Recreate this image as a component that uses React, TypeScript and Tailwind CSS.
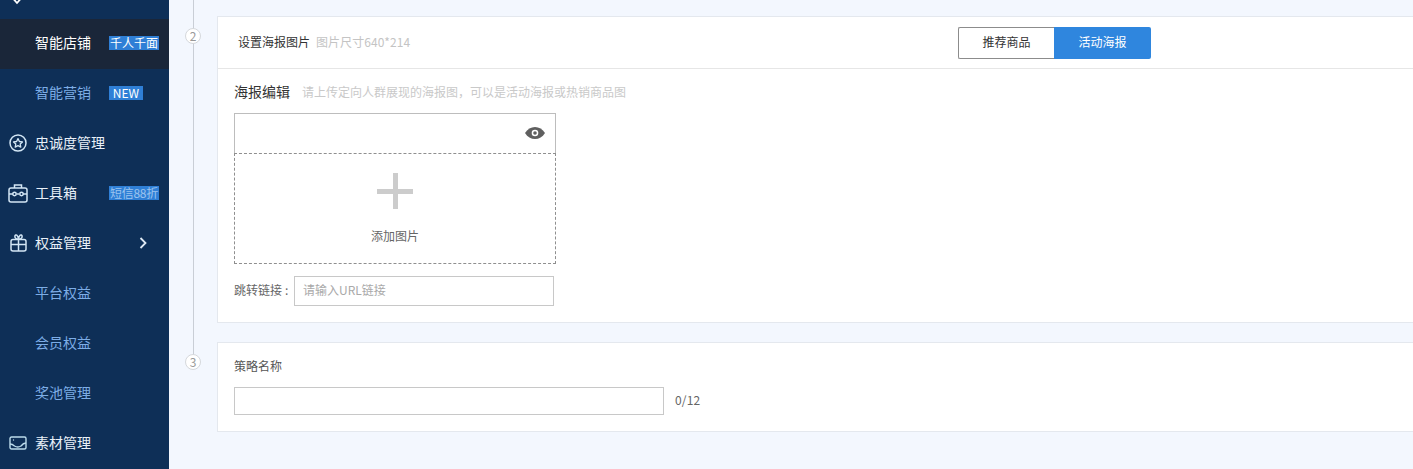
import React from "react";

function Star() {
  return (
    <svg width="18" height="18" viewBox="0 0 18 18" fill="none" stroke="#d3e6f5" strokeWidth="1.5">
      <circle cx="9" cy="9" r="8" />
      <path d="M9 4.600l1.400 2.900 3.100.4-2.300 2.100.6 3.100L9 11.600l-2.800 1.500.6-3.100-2.300-2.100 3.100-.4z" strokeLinejoin="round" strokeWidth="1.300" />
    </svg>
  );
}
function Toolbox() {
  return (
    <svg width="20" height="19" viewBox="0 0 20 19" fill="none" stroke="#d3e6f5" strokeWidth="1.500">
      <rect x="1" y="4" width="18" height="14" rx="2" />
      <path d="M6.500 4V1h7v3M1 10h4M15 10h4M8.500 10h3" />
      <circle cx="6.500" cy="10" r="1.700" />
      <circle cx="13.500" cy="10" r="1.700" />
    </svg>
  );
}
function Gift() {
  return (
    <svg width="17" height="18" viewBox="0 0 17 18" fill="none" stroke="#d3e6f5" strokeWidth="1.500">
      <rect x="1" y="5.500" width="15" height="11.500" rx="2" />
      <path d="M1 10.500h15M8.500 5.500V17M8.500 5.500C6 5.500 4.500 3.500 5 1.800s3-1.300 3.500 3.700zM8.500 5.500c2.500 0 4-2 3.500-3.700s-3-1.300-3.500 3.700z" />
    </svg>
  );
}
function Inbox() {
  return (
    <svg width="18" height="14" viewBox="0 0 18 14" fill="none" stroke="#bcdcec" strokeWidth="1.400">
      <rect x="1" y="1" width="16" height="12" rx="1.500" />
      <path d="M1 8c2 0 3 .6 4.500 2 2 1.200 4.500 1.200 6.500 0 1.500-2 3-3 5-3" />
      <circle cx="4.500" cy="4" r=".7" fill="#bcdcec" stroke="none" />
    </svg>
  );
}

type ItemProps = {
  icon?: React.ReactNode;
  label: string;
  sub?: boolean;
  active?: boolean;
  badge?: string;
  badgeClass?: string;
  chevron?: boolean;
};

function Item({ icon, label, sub, active, badge, badgeClass, chevron }: ItemProps) {
  const color = active ? "text-white" : sub ? "text-[#7dade6]" : "text-[#e8f0f8]";
  return (
    <div className={`relative flex h-[50px] items-center ${active ? "bg-[#1a2639]" : ""}`}>
      <div className="mb-[2px] flex w-[35px] shrink-0 items-center justify-center pl-[1px]">{icon}</div>
      <span className={`mb-[4px] text-[14px] leading-none ${color}`}>{label}</span>
      {badge && (
        <span className={`absolute left-[109px] mb-[2px] flex h-[14px] items-center justify-center bg-[#2f7fd6] text-[12px] leading-none ${badgeClass ?? ""}`}>
          {badge}
        </span>
      )}
      {chevron && (
        <svg className="absolute left-[139px] mb-[2px]" width="9" height="12" viewBox="0 0 9 12" fill="none" stroke="#dfe9f3" strokeWidth="1.800">
          <path d="M1.500 1l5 5-5 5" />
        </svg>
      )}
    </div>
  );
}

function Step({ n, top }: { n: number; top: string }) {
  return (
    <span className={`absolute left-[16px] ${top} flex h-[16px] w-[16px] items-center justify-center rounded-full border border-[#d5d8dc] bg-white text-[12px] leading-none text-[#999]`}>
      {n}
    </span>
  );
}

export default function App() {
  return (
    <div className="flex h-[469px] w-[1413px] overflow-hidden bg-[#f3f7fe] font-['Noto_Sans_CJK_SC','Liberation_Sans',sans-serif]">
      <aside className="w-[169px] shrink-0 overflow-hidden bg-[#0e2f57]">
        <div className="flex h-[19px] items-start pl-[12px]">
          <svg width="10" height="6" viewBox="0 0 10 6" fill="none" stroke="#fff" strokeWidth="1.800">
            <path d="M1.500 -1L5 3l3.500-4" />
          </svg>
        </div>
        <Item label="智能店铺" active badge="千人千面" badgeClass="w-[50px] text-white" />
        <Item label="智能营销" sub badge="NEW" badgeClass="w-[34px] text-white" />
        <Item label="忠诚度管理" icon={<Star />} />
        <Item label="工具箱" icon={<Toolbox />} badge="短信88折" badgeClass="w-[50px] tracking-[-0.3px] text-[#9cc4ee]" />
        <Item label="权益管理" icon={<Gift />} chevron />
        <Item label="平台权益" sub />
        <Item label="会员权益" sub />
        <Item label="奖池管理" sub />
        <Item label="素材管理" icon={<Inbox />} />
      </aside>

      <div className="relative w-[48px] shrink-0">
        <div className="ml-[24px] h-[355px] w-px bg-[#c9ced6]" />
        <Step n={2} top="top-[28px]" />
        <Step n={3} top="top-[354px]" />
      </div>

      <main className="min-w-0 flex-1 pt-[16px]">
        <section className="-mr-4 h-[307px] border border-r-0 border-[#e4e8ee] bg-white">
          <div className="flex h-[52px] items-center border-b border-[#e6e6e6] pl-[20px]">
            <span className="mb-[2px] text-[12px] text-[#333]">设置海报图片</span>
            <span className="mb-[2px] ml-[6px] w-[96px] text-[12px] tracking-[0.05px] text-[#c4c4c4]">图片尺寸640*214</span>
            <div className="ml-[546px] flex h-[32px] w-[193px] text-[12px]">
              <button className="h-full w-[96px] rounded-l-[2px] border border-r-0 border-[#8c8c8c] bg-white pb-[2px] text-[#333]">推荐商品</button>
              <button className="h-full w-[97px] rounded-r-[2px] bg-[#2f86de] pb-[2px] text-white">活动海报</button>
            </div>
          </div>
          <div className="px-[16px] pt-[13px]">
            <div className="flex h-[20px] items-center">
              <span className="mb-[2px] text-[14px] leading-none text-[#333]">海报编辑</span>
              <span className="ml-[12px] text-[12px] leading-none text-[#c9c9c9]">请上传定向人群展现的海报图，可以是活动海报或热销商品图</span>
            </div>
            <div className="mt-[11px] w-[322px]">
              <div className="flex h-[40px] items-center justify-end border border-b-0 border-[#bdbdbd] pb-[2px] pr-[9px]">
                <svg width="22" height="14" viewBox="0 0 22 14">
                  <path d="M1 7c2.500-4 6-6 10-6s7.500 2 10 6c-2.500 4-6 6-10 6S3.500 11 1 7z" fill="#5f5f5f" />
                  <circle cx="11" cy="7" r="3.300" fill="#fff" />
                  <circle cx="11" cy="7" r="1.800" fill="#5f5f5f" />
                </svg>
              </div>
              <div className="flex h-[111px] flex-col items-center border border-dashed border-[#8f8f8f] pt-[19px]">
                <svg width="36" height="36" viewBox="0 0 36 36" fill="#cccccc">
                  <rect x="16" width="5" height="36" />
                  <rect y="16" width="36" height="5" />
                </svg>
                <span className="mt-[21px] text-[12px] leading-none text-[#666]">添加图片</span>
              </div>
            </div>
            <div className="mt-[12px] flex items-center">
              <span className="mb-[2px] flex w-[60px] text-[12px] text-[#666]">
                <span>跳转链接</span>
                <span className="ml-[3px]">:</span>
              </span>
              <div className="flex h-[30px] w-[260px] items-center border border-[#c8c8c8] pb-[2px] pl-[8px] text-[12px] text-[#a9a9a9]">请输入URL链接</div>
            </div>
          </div>
        </section>
        <section className="-mr-4 mt-[19px] h-[90px] border border-r-0 border-[#e4e8ee] bg-white px-[16px] pt-[14px]">
          <div className="text-[12px] leading-[18px] text-[#555]">策略名称</div>
          <div className="mt-[12px] flex items-center">
            <div className="h-[28px] w-[430px] border border-[#c8c8c8]" />
            <span className="mb-[2px] ml-[11px] text-[12px] tracking-[0.2px] text-[#666]">0/12</span>
          </div>
        </section>
      </main>
    </div>
  );
}
